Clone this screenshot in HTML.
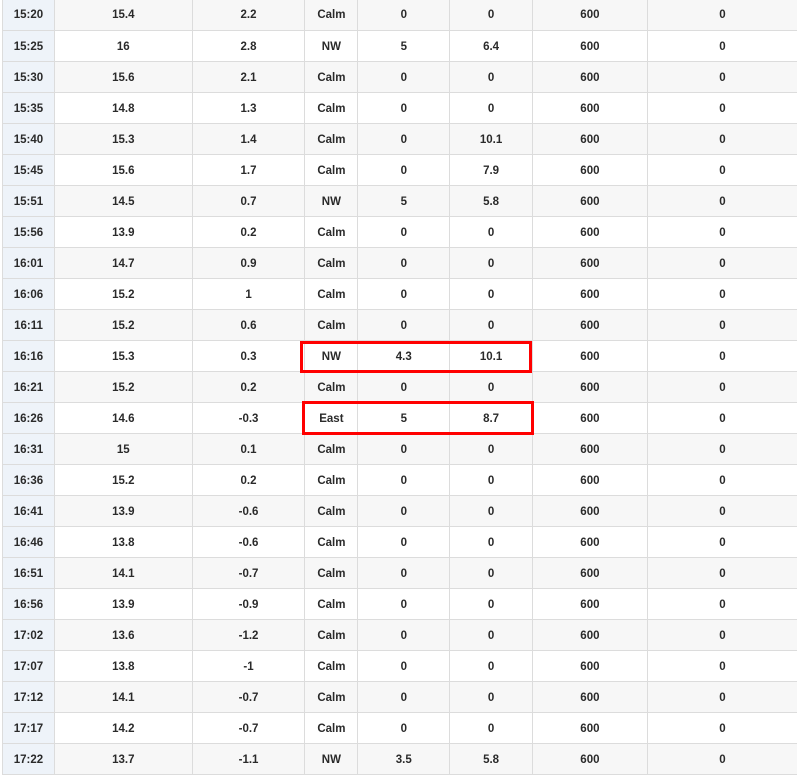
<!DOCTYPE html>
<html><head><meta charset="utf-8"><style>
body{margin:0;width:797px;height:773px;overflow:hidden;background:#fff;font-family:"Liberation Sans",sans-serif;}
table{position:absolute;left:2px;top:-1px;border-collapse:collapse;table-layout:fixed;}
tr{height:31px;}
td{height:31px;padding:2px 0 0 0;box-sizing:border-box;border-right:1px solid #dcdcdc;border-bottom:1px solid #dcdcdc;text-align:center;font-size:11.5px;font-weight:bold;color:#2a2a2a;}
td:first-child{border-left:1px solid #dcdcdc;background:#eef3f9 !important;}
td:last-child{border-right:none;}
tr:nth-child(odd) td{background:#f7f7f7;}
.box{position:absolute;border:3px solid #ff0000;box-sizing:border-box;}
</style></head><body>
<table>
<colgroup><col style="width:52px"><col style="width:138px"><col style="width:113px"><col style="width:53px"><col style="width:92px"><col style="width:83px"><col style="width:115px"><col style="width:150px"></colgroup>
<tr><td>15:20</td><td>15.4</td><td>2.2</td><td>Calm</td><td>0</td><td>0</td><td>600</td><td>0</td></tr>
<tr><td>15:25</td><td>16</td><td>2.8</td><td>NW</td><td>5</td><td>6.4</td><td>600</td><td>0</td></tr>
<tr><td>15:30</td><td>15.6</td><td>2.1</td><td>Calm</td><td>0</td><td>0</td><td>600</td><td>0</td></tr>
<tr><td>15:35</td><td>14.8</td><td>1.3</td><td>Calm</td><td>0</td><td>0</td><td>600</td><td>0</td></tr>
<tr><td>15:40</td><td>15.3</td><td>1.4</td><td>Calm</td><td>0</td><td>10.1</td><td>600</td><td>0</td></tr>
<tr><td>15:45</td><td>15.6</td><td>1.7</td><td>Calm</td><td>0</td><td>7.9</td><td>600</td><td>0</td></tr>
<tr><td>15:51</td><td>14.5</td><td>0.7</td><td>NW</td><td>5</td><td>5.8</td><td>600</td><td>0</td></tr>
<tr><td>15:56</td><td>13.9</td><td>0.2</td><td>Calm</td><td>0</td><td>0</td><td>600</td><td>0</td></tr>
<tr><td>16:01</td><td>14.7</td><td>0.9</td><td>Calm</td><td>0</td><td>0</td><td>600</td><td>0</td></tr>
<tr><td>16:06</td><td>15.2</td><td>1</td><td>Calm</td><td>0</td><td>0</td><td>600</td><td>0</td></tr>
<tr><td>16:11</td><td>15.2</td><td>0.6</td><td>Calm</td><td>0</td><td>0</td><td>600</td><td>0</td></tr>
<tr><td>16:16</td><td>15.3</td><td>0.3</td><td>NW</td><td>4.3</td><td>10.1</td><td>600</td><td>0</td></tr>
<tr><td>16:21</td><td>15.2</td><td>0.2</td><td>Calm</td><td>0</td><td>0</td><td>600</td><td>0</td></tr>
<tr><td>16:26</td><td>14.6</td><td>-0.3</td><td>East</td><td>5</td><td>8.7</td><td>600</td><td>0</td></tr>
<tr><td>16:31</td><td>15</td><td>0.1</td><td>Calm</td><td>0</td><td>0</td><td>600</td><td>0</td></tr>
<tr><td>16:36</td><td>15.2</td><td>0.2</td><td>Calm</td><td>0</td><td>0</td><td>600</td><td>0</td></tr>
<tr><td>16:41</td><td>13.9</td><td>-0.6</td><td>Calm</td><td>0</td><td>0</td><td>600</td><td>0</td></tr>
<tr><td>16:46</td><td>13.8</td><td>-0.6</td><td>Calm</td><td>0</td><td>0</td><td>600</td><td>0</td></tr>
<tr><td>16:51</td><td>14.1</td><td>-0.7</td><td>Calm</td><td>0</td><td>0</td><td>600</td><td>0</td></tr>
<tr><td>16:56</td><td>13.9</td><td>-0.9</td><td>Calm</td><td>0</td><td>0</td><td>600</td><td>0</td></tr>
<tr><td>17:02</td><td>13.6</td><td>-1.2</td><td>Calm</td><td>0</td><td>0</td><td>600</td><td>0</td></tr>
<tr><td>17:07</td><td>13.8</td><td>-1</td><td>Calm</td><td>0</td><td>0</td><td>600</td><td>0</td></tr>
<tr><td>17:12</td><td>14.1</td><td>-0.7</td><td>Calm</td><td>0</td><td>0</td><td>600</td><td>0</td></tr>
<tr><td>17:17</td><td>14.2</td><td>-0.7</td><td>Calm</td><td>0</td><td>0</td><td>600</td><td>0</td></tr>
<tr><td>17:22</td><td>13.7</td><td>-1.1</td><td>NW</td><td>3.5</td><td>5.8</td><td>600</td><td>0</td></tr>
</table>
<div class="box" style="left:300px;top:341px;width:232px;height:32px"></div>
<div class="box" style="left:302px;top:401px;width:232px;height:34px"></div>
</body></html>
